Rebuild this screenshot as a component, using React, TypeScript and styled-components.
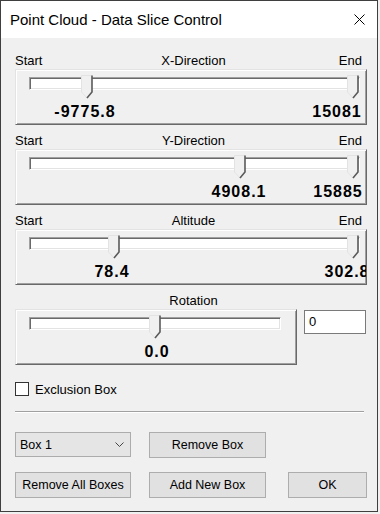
import styled, { createGlobalStyle } from 'styled-components'

const GlobalStyle = createGlobalStyle`
  html, body {
    margin: 0;
    padding: 0;
    background: #f0f0f0;
  }
  body {
    font-family: "Liberation Sans", Arial, sans-serif;
    color: #000;
  }
`

const Window = styled.div`
  width: 378px;
  height: 512px;
  box-sizing: border-box;
  border: 1px solid #3f3f3f;
  background: #f0f0f0;
  display: flex;
  flex-direction: column;
`

const TitleBar = styled.div`
  height: 37px;
  background: #fff;
  display: flex;
  align-items: center;
  padding-left: 9px;
  font-size: 15px;
`

const TitleText = styled.span`
  flex: 1;
`

const CloseButton = styled.div`
  width: 36px;
  height: 37px;
  display: flex;
  align-items: center;
  justify-content: center;
`

const Body = styled.div`
  display: flex;
  flex-direction: column;
  padding: 14px 10px 0 14px;
`

const Sliders = styled.div`
  display: flex;
  flex-direction: column;
  gap: 7px;
`

const LabelRow = styled.div`
  display: grid;
  grid-template-columns: 1fr auto 1fr;
  height: 17px;
  line-height: 17px;
  font-size: 13px;
  padding-right: 5px;
`

const StartLabel = styled.span`
  justify-self: start;
`

const CenterLabel = styled.span`
  padding-left: 10px;
`

const EndLabel = styled.span`
  justify-self: end;
`

const Panel = styled.div<{ $width?: number }>`
  position: relative;
  box-sizing: border-box;
  height: 56px;
  width: ${p => (p.$width ? `${p.$width}px` : 'auto')};
  flex-shrink: 0;
  border: 1px solid;
  border-color: #e3e3e3 #696969 #696969 #e3e3e3;
  box-shadow: inset 1px 1px 0 #fff, inset -1px -1px 0 #a0a0a0;
  padding-top: 7px;
  overflow: hidden;
`

const Track = styled.div<{ $right: number }>`
  position: relative;
  box-sizing: border-box;
  height: 13px;
  margin: 0 ${p => p.$right}px 0 13px;
  background: #fff;
  border: 1px solid;
  border-color: #a0a0a0 #fff #fff #a0a0a0;
  box-shadow: inset 1px 1px 0 #696969, inset -1px -1px 0 #e3e3e3;
`

const Thumb = styled.svg`
  position: absolute;
  top: -3px;
  width: 12px;
  height: 24px;
`

const ValueRow = styled.div`
  position: relative;
  height: 16px;
  margin-top: 14px;
`

const Value = styled.span`
  position: absolute;
  top: 0;
  transform: translateX(-50%);
  font-size: 16px;
  line-height: 16px;
  font-weight: bold;
  letter-spacing: 1px;
  white-space: nowrap;
`

const RotationRow = styled.div`
  display: flex;
  align-items: flex-start;
  gap: 7px;
`

const TextBox = styled.div`
  box-sizing: border-box;
  width: 62px;
  height: 24px;
  margin-top: 1px;
  background: #fff;
  border: 1px solid #7a7a7a;
  padding-left: 4px;
  font-size: 13px;
  line-height: 22px;
`

const CheckRow = styled.label`
  display: flex;
  align-items: center;
  gap: 6px;
  height: 14px;
  margin-top: 17px;
  font-size: 13px;
`

const CheckBox = styled.span`
  box-sizing: border-box;
  width: 14px;
  height: 14px;
  background: #fff;
  border: 1px solid #333;
`

const Separator = styled.div`
  height: 1px;
  margin: 15px 3px 0 0;
  background: #a0a0a0;
  border-bottom: 1px solid #fff;
`

const Controls = styled.div`
  display: grid;
  grid-template-columns: 116px 117px 1fr;
  grid-auto-rows: 26px;
  column-gap: 18px;
  row-gap: 14px;
  margin-top: 19px;
`

const Button = styled.div<{ $width?: number }>`
  box-sizing: border-box;
  width: ${p => (p.$width ? `${p.$width}px` : 'auto')};
  justify-self: ${p => (p.$width ? 'end' : 'stretch')};
  display: flex;
  align-items: center;
  justify-content: center;
  background: #e1e1e1;
  border: 1px solid #adadad;
  font-size: 12.5px;
  white-space: nowrap;
`

const Combo = styled.div`
  box-sizing: border-box;
  height: 25px;
  display: flex;
  align-items: center;
  justify-content: space-between;
  padding: 0 6px 0 4px;
  background: #e5e5e5;
  border: 1px solid #acacac;
  font-size: 12.5px;
`

interface SliderValue {
  pos: number
  label: string
  labelX: number
}

interface SliderProps {
  values: SliderValue[]
  trackRight: number
  width?: number
}

function ThumbShape({ pos }: { pos: number }) {
  return (
    <Thumb viewBox="0 0 12 24" style={{ left: `calc((100% - 12px) * ${pos})` }}>
      <polygon points="0.5,0.5 11,0.5 11,17 6,23 0.5,17" fill="#f0f0f0" />
      <polyline points="6,23 0.5,17 0.5,0.5 11,0.5" fill="none" stroke="#e3e3e3" strokeWidth="1" />
      <polyline points="11,0.5 11,17 6,23" fill="none" stroke="#5a5a5a" strokeWidth="1.6" />
    </Thumb>
  )
}

function Slider({ values, trackRight, width }: SliderProps) {
  return (
    <Panel $width={width}>
      <Track $right={trackRight}>
        {values.map((v, i) => (
          <ThumbShape key={i} pos={v.pos} />
        ))}
      </Track>
      <ValueRow>
        {values.map((v, i) => (
          <Value key={i} style={{ left: v.labelX - 1 }}>
            {v.label}
          </Value>
        ))}
      </ValueRow>
    </Panel>
  )
}

const ranges = [
  {
    title: 'X-Direction',
    values: [
      { pos: 0.16, label: '-9775.8', labelX: 70 },
      { pos: 1, label: '15081', labelX: 322 },
    ],
  },
  {
    title: 'Y-Direction',
    values: [
      { pos: 0.645, label: '4908.1', labelX: 224 },
      { pos: 1, label: '15885', labelX: 323 },
    ],
  },
  {
    title: 'Altitude',
    values: [
      { pos: 0.245, label: '78.4', labelX: 97 },
      { pos: 1, label: '302.8', labelX: 332 },
    ],
  },
]

export default function App() {
  return (
    <>
      <GlobalStyle />
      <Window>
        <TitleBar>
          <TitleText>Point Cloud - Data Slice Control</TitleText>
          <CloseButton>
            <svg width="11" height="11" viewBox="0 0 11 11">
              <path d="M0.5 0.5 L10.5 10.5 M10.5 0.5 L0.5 10.5" stroke="#000" strokeWidth="1" />
            </svg>
          </CloseButton>
        </TitleBar>
        <Body>
          <Sliders>
            {ranges.map(r => (
              <div key={r.title}>
                <LabelRow>
                  <StartLabel>Start</StartLabel>
                  <CenterLabel>{r.title}</CenterLabel>
                  <EndLabel>End</EndLabel>
                </LabelRow>
                <Slider values={r.values} trackRight={6} />
              </div>
            ))}
            <div>
              <LabelRow>
                <span />
                <CenterLabel>Rotation</CenterLabel>
                <span />
              </LabelRow>
              <RotationRow>
                <Slider values={[{ pos: 0.5, label: '0.0', labelX: 142 }]} trackRight={15} width={282} />
                <TextBox>0</TextBox>
              </RotationRow>
            </div>
          </Sliders>
          <CheckRow>
            <CheckBox />
            Exclusion Box
          </CheckRow>
          <Separator />
          <Controls>
            <Combo>
              <span>Box 1</span>
              <svg width="9" height="5" viewBox="0 0 9 5">
                <polyline points="0.5,0.5 4.5,4.5 8.5,0.5" fill="none" stroke="#444" strokeWidth="1" />
              </svg>
            </Combo>
            <Button>Remove Box</Button>
            <span />
            <Button>Remove All Boxes</Button>
            <Button>Add New Box</Button>
            <Button $width={79}>OK</Button>
          </Controls>
        </Body>
      </Window>
    </>
  )
}
